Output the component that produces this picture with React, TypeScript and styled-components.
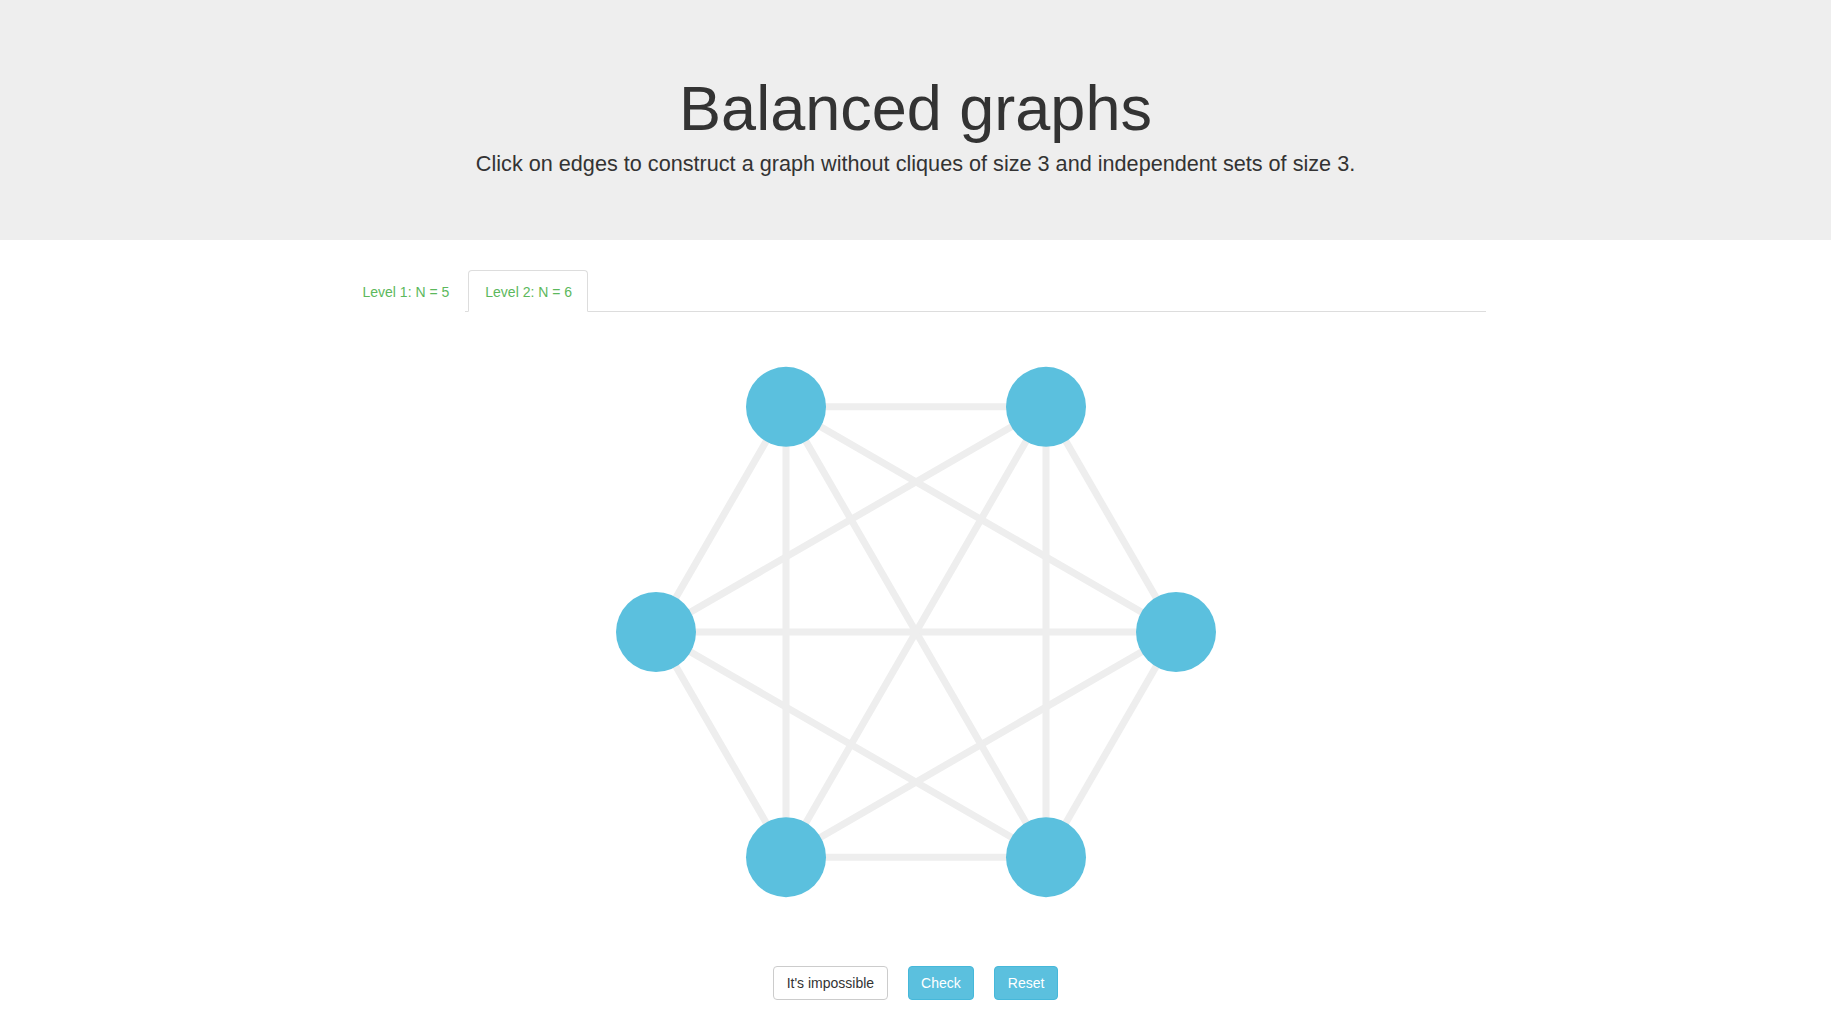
import React from "react";
import styled, { createGlobalStyle } from "styled-components";

const GlobalStyle = createGlobalStyle`
  html, body { margin: 0; padding: 0; background: #fff; }
  body {
    font-family: "Liberation Sans", Arial, Helvetica, sans-serif;
    font-size: 14px;
    line-height: 1.42857;
    color: #333;
  }
  * { box-sizing: border-box; }
`;

const Jumbotron = styled.header`
  background: #eee;
  height: 240px;
  padding-top: 74px;
  text-align: center;
`;

const Title = styled.h1`
  margin: 0;
  font-size: 63px;
  font-weight: 500;
  line-height: 69px;
  color: #333;
`;

const Lead = styled.p`
  margin: 6px 0 0;
  font-size: 21.65px;
  font-weight: 200;
  line-height: 30px;
  color: #333;
`;

const Container = styled.main`
  width: 1140px;
  margin: 30px auto 0;
  display: flex;
  flex-direction: column;
  align-items: center;
`;

const Tabs = styled.ul`
  list-style: none;
  margin: 0;
  padding: 0;
  width: 100%;
  display: flex;
  border-bottom: 1px solid #ddd;
`;

const Tab = styled.li<{ $active?: boolean }>`
  margin-right: 3px;
  margin-bottom: -1px;
  padding: 11px 15px 9px 16px;
  line-height: 20px;
  font-size: 14px;
  color: #5cb85c;
  border: 1px solid ${(p) => (p.$active ? "#ddd" : "transparent")};
  border-bottom-color: ${(p) => (p.$active ? "#fff" : "transparent")};
  border-radius: 4px 4px 0 0;
  background: #fff;
  cursor: pointer;
`;

const GraphSvg = styled.svg`
  display: block;
  width: 620px;
  height: 640px;
`;

const Edge = styled.line`
  stroke: #eee;
  stroke-width: 7px;
  cursor: pointer;
`;

const Node = styled.circle`
  fill: #5bc0de;
`;

const ButtonRow = styled.div`
  display: flex;
  gap: 20px;
  margin-top: 14px;
`;

const Button = styled.button<{ $info?: boolean }>`
  font-family: "Liberation Sans", Arial, Helvetica, sans-serif;
  font-size: 14px;
  line-height: 20px;
  padding: 6px 12.5px;
  border-radius: 4px;
  border: 1px solid ${(p) => (p.$info ? "#46b8da" : "#ccc")};
  background: ${(p) => (p.$info ? "#5bc0de" : "#fff")};
  color: ${(p) => (p.$info ? "#fff" : "#333")};
  cursor: pointer;
`;

const CX = 310;
const CY = 320;
const R = 260;
const nodes = [0, 1, 2, 3, 4, 5].map((i) => {
  const a = (Math.PI / 3) * i;
  return { x: CX + R * Math.cos(a), y: CY + R * Math.sin(a) };
});
const edges: [number, number][] = [];
for (let i = 0; i < 6; i++) for (let j = i + 1; j < 6; j++) edges.push([i, j]);

export default function App() {
  return (
    <>
      <GlobalStyle />
      <Jumbotron>
        <Title>Balanced graphs</Title>
        <Lead>
          Click on edges to construct a graph without cliques of size 3 and independent sets of size 3.
        </Lead>
      </Jumbotron>
      <Container>
        <Tabs>
          <Tab>Level 1: N = 5</Tab>
          <Tab $active>Level 2: N = 6</Tab>
        </Tabs>
        <GraphSvg viewBox="0 0 620 640">
          {edges.map(([a, b]) => (
            <Edge
              key={`${a}-${b}`}
              x1={nodes[a].x}
              y1={nodes[a].y}
              x2={nodes[b].x}
              y2={nodes[b].y}
            />
          ))}
          {nodes.map((n, i) => (
            <Node key={i} cx={n.x} cy={n.y} r={40} />
          ))}
        </GraphSvg>
        <ButtonRow>
          <Button>It's impossible</Button>
          <Button $info>Check</Button>
          <Button $info>Reset</Button>
        </ButtonRow>
      </Container>
    </>
  );
}
